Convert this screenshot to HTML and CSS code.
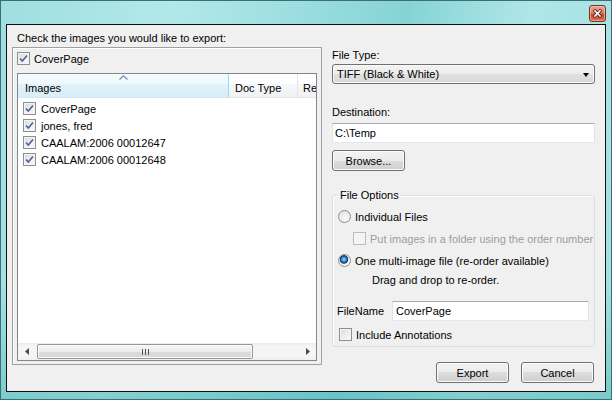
FILE: index.html
```html
<!DOCTYPE html>
<html lang="en">
<head>
  <meta charset="UTF-8" />
  <title>Export Images</title>
  <link rel="stylesheet" href="styles.css">
</head>
<body>

  <div class="window">
    <div class="titlebar">
      <div class="close-btn">
        <svg width="15" height="15" viewBox="0 0 15 15">
          <path d="M5 5 L10 10 M10 5 L5 10" stroke="#5a2016" stroke-width="3.2" stroke-linecap="square"/>
          <path d="M5 5 L10 10 M10 5 L5 10" stroke="#fff" stroke-width="1.6" stroke-linecap="square"/>
        </svg>
      </div>
    </div>

    <div class="client">
      <div class="left-col">
        <div class="caption">Check the images you would like to export:</div>
        <div class="image-panel">
          <div class="check-row top-check"><span class="cb checked"><svg viewBox="0 0 11 11"><path d="M2 5.5 L4.3 8 L9 2.5"/></svg></span>CoverPage</div>

          <div class="listview">
            <div class="lv-header">
              <div class="lv-col col-images sorted">
                <svg class="sort-arrow" width="9" height="5" viewBox="0 0 9 5"><path d="M0.5 4.5 L4.5 0.8 L8.5 4.5" fill="none" stroke="#6b8fb5" stroke-width="1.2"/></svg>
                Images
              </div>
              <div class="lv-col col-doctype">Doc Type</div>
              <div class="lv-col col-re">Re</div>
            </div>
            <div class="lv-rows">
              <div class="lv-row"><span class="cb checked"><svg viewBox="0 0 11 11"><path d="M2 5.5 L4.3 8 L9 2.5"/></svg></span>CoverPage</div>
              <div class="lv-row"><span class="cb checked"><svg viewBox="0 0 11 11"><path d="M2 5.5 L4.3 8 L9 2.5"/></svg></span>jones, fred</div>
              <div class="lv-row"><span class="cb checked"><svg viewBox="0 0 11 11"><path d="M2 5.5 L4.3 8 L9 2.5"/></svg></span>CAALAM:2006 00012647</div>
              <div class="lv-row"><span class="cb checked"><svg viewBox="0 0 11 11"><path d="M2 5.5 L4.3 8 L9 2.5"/></svg></span>CAALAM:2006 00012648</div>
            </div>
            <div class="hscroll">
              <span class="sb-btn"><svg width="4" height="7" viewBox="0 0 4 7"><path d="M4 0 L0 3.5 L4 7 Z" fill="#4b4b4b"/></svg></span>
              <span class="sb-thumb">
                <svg width="7" height="6" viewBox="0 0 7 6"><path d="M0.5 0 V6 M3.5 0 V6 M6.5 0 V6" stroke="#555" stroke-width="1"/></svg>
              </span>
              <span class="sb-track"></span>
              <span class="sb-btn"><svg width="4" height="7" viewBox="0 0 4 7"><path d="M0 0 L4 3.5 L0 7 Z" fill="#4b4b4b"/></svg></span>
            </div>
          </div>
        </div>
      </div>

      <div class="right-col">
        <div class="field-label first">File Type:</div>
        <div class="combo">TIFF (Black &amp; White)<span class="combo-arrow"></span></div>

        <div class="field-label dest">Destination:</div>
        <div class="textbox">C:\Temp</div>

        <button class="btn browse-btn">Browse...</button>

        <fieldset class="options">
          <legend>File Options</legend>
          <div class="opt-row opt-radio"><span class="rb"></span>Individual Files</div>
          <div class="opt-row opt-sub disabled"><span class="cb disabled-cb"></span>Put images in a folder using the order number</div>
          <div class="opt-row opt-radio second"><span class="rb selected"></span>One multi-image file (re-order available)</div>
          <div class="opt-row opt-hint">Drag and drop to re-order.</div>
          <div class="opt-row filename-row">
            <span class="filename-label">FileName</span>
            <div class="textbox filename-box">CoverPage</div>
          </div>
          <div class="opt-row opt-annot"><span class="cb"></span>Include Annotations</div>
        </fieldset>

        <div class="dialog-buttons">
          <button class="btn">Export</button>
          <button class="btn">Cancel</button>
        </div>
      </div>
    </div>
  </div>

</body>
</html>
```

FILE: styles.css
```css
* {
  box-sizing: border-box;
}
body {
  margin: 0;
  font-family: "Liberation Sans", Arial, sans-serif;
  font-size: 11px;
  color: #000;
  background: #24474a;
}
.window {
  width: 612px;
  height: 400px;
  border: 1px solid #3d6f72;
  padding: 0 5px 7px;
  display: flex;
  flex-direction: column;
  background:
    linear-gradient(180deg, rgba(255,255,255,0) 70%, rgba(60,170,170,0.4) 100%),
    linear-gradient(100deg, #9edfe1 0%, #b3e8e9 25%, #9adde0 45%, #86d3d6 60%, #afe6e8 78%, #a2e0e2 100%);
}
.titlebar {
  height: 23px;
  display: flex;
  justify-content: flex-end;
  align-items: flex-start;
  padding-top: 4px;
}
.close-btn {
  width: 17px;
  height: 17px;
  border: 1px solid #7a3426;
  border-radius: 3px;
  background-color: #d5634a;
  background-image: linear-gradient(#eba58f 0%, #e08468 45%, #cc4a2c 55%, #dc7050 100%);
  box-shadow: inset 0 0 0 1px rgba(255,220,200,0.45);
  display: flex;
  align-items: center;
  justify-content: center;
}
.client {
  flex: 1;
  border: 1px solid #101010;
  background: #f0f0f0;
  display: grid;
  grid-template-columns: 310px 263px;
  column-gap: 10px;
  padding: 0 10px 0 5px;
}

/* left side */
.caption {
  height: 22px;
  padding: 5px 0 0 5px;
  line-height: 17px;
}
.image-panel {
  height: 318px;
  border: 1px solid #a0a0a0;
  box-shadow: inset 1px 1px 0 #fff;
  padding: 4px 4px 3px;
  display: flex;
  flex-direction: column;
}
.check-row {
  display: flex;
  align-items: center;
}
.top-check {
  height: 13px;
  margin-bottom: 8px;
}
.cb {
  width: 13px;
  height: 13px;
  flex: none;
  border: 1px solid #8e8f8f;
  background: linear-gradient(135deg, #d8d9da 0%, #eeeeee 55%, #fbfbfb 100%);
  box-shadow: inset 0 0 0 1px #f4f4f4;
  margin-right: 4px;
  display: inline-flex;
}
.cb svg {
  width: 11px;
  height: 11px;
}
.cb svg path {
  fill: none;
  stroke: #4a5f95;
  stroke-width: 1.5;
}
.listview {
  flex: 1;
  border: 1px solid #828790;
  background: #fff;
  display: flex;
  flex-direction: column;
  overflow: hidden;
}
.lv-header {
  display: flex;
  height: 24px;
  flex: none;
}
.lv-col {
  position: relative;
  display: flex;
  align-items: center;
  padding-top: 4px;
  white-space: nowrap;
  overflow: hidden;
  border-right: 1px solid #e3e5e7;
  border-bottom: 1px solid #e5e5e5;
  background: linear-gradient(#ffffff 0%, #ffffff 45%, #f6f7f8 45%, #f1f2f3 100%);
}
.lv-col.sorted {
  background: linear-gradient(#f6fbfd 0%, #eef8fc 45%, #e0f1f9 45%, #d9eef8 100%);
  border-right-color: #96d9f9;
  border-bottom-color: #cfe8f5;
}
.sort-arrow {
  position: absolute;
  top: 1px;
  left: 101px;
}
.col-images {
  width: 211px;
  padding-left: 7px;
}
.col-doctype {
  width: 69px;
  padding-left: 6px;
}
.col-re {
  flex: 1;
  padding-left: 5px;
  border-right: none;
}
.lv-rows {
  flex: 1;
  padding-top: 2px;
}
.lv-row {
  height: 17px;
  display: flex;
  align-items: center;
  padding-left: 5px;
}
.lv-row .cb {
  margin-right: 5px;
}
.hscroll {
  height: 17px;
  flex: none;
  display: flex;
  align-items: center;
  background: linear-gradient(#ebebeb 0%, #f5f5f5 20%, #f5f5f5 80%, #eeeeee 100%);
}
.sb-btn {
  width: 17px;
  height: 17px;
  display: flex;
  align-items: center;
  justify-content: center;
}
.sb-thumb {
  width: 216px;
  height: 15px;
  margin-left: 2px;
  border: 1px solid #979797;
  border-radius: 2px;
  background: linear-gradient(#f6f6f6 0%, #ececec 50%, #dcdcdc 51%, #d6d6d6 100%);
  box-shadow: inset 0 0 0 1px #fbfbfb;
  display: flex;
  align-items: center;
  justify-content: center;
}
.sb-track {
  flex: 1;
}

/* right side */
.field-label {
  line-height: 16px;
}
.field-label.first {
  margin-top: 22px;
}
.field-label.dest {
  margin-top: 20px;
}
.combo {
  position: relative;
  height: 20px;
  margin-top: 1px;
  padding-left: 4px;
  line-height: 18px;
  border: 1px solid #707070;
  border-radius: 3px;
  background: linear-gradient(#f3f3f3 0%, #ececec 50%, #e0e0e0 50%, #d9d9d9 100%);
  box-shadow: inset 0 0 0 1px #fafafa;
}
.combo-arrow {
  position: absolute;
  right: 5px;
  top: 8px;
  border-left: 3.5px solid transparent;
  border-right: 3.5px solid transparent;
  border-top: 4px solid #000;
}
.textbox {
  height: 20px;
  margin-top: 3px;
  padding-left: 2px;
  line-height: 18px;
  background: #fff;
  border: 1px solid #dbdfe6;
  border-top-color: #abadb3;
  border-left-color: #e2e3ea;
  border-right-color: #e2e3ea;
  border-bottom-color: #e3e9ef;
}
.btn {
  width: 73px;
  height: 21px;
  padding: 0;
  font: inherit;
  color: #000;
  border: 1px solid #707070;
  border-radius: 3px;
  background: linear-gradient(#f2f2f2 0%, #ebebeb 50%, #dddddd 50%, #cfcfcf 100%);
  box-shadow: inset 0 0 0 1px #fcfcfc;
}
.browse-btn {
  display: block;
  margin-top: 7px;
}
.options {
  margin: 17px 0 0;
  padding: 0 0 3px;
  min-width: 0;
  border: 1px solid #d5dfe5;
  border-radius: 3px;
  box-shadow: inset 1px 1px 0 #fff;
}
.options legend {
  margin-left: 5px;
  padding: 0 2px;
  line-height: 14px;
}
.opt-row {
  height: 17px;
  display: flex;
  align-items: center;
  white-space: nowrap;
  overflow: hidden;
}
.opt-radio {
  margin-top: 6px;
  margin-left: 5px;
}
.opt-radio.second {
  margin-top: 5px;
}
.rb {
  width: 13px;
  height: 13px;
  flex: none;
  margin-right: 4px;
  border-radius: 50%;
  border: 1px solid #8e8f8f;
  background: radial-gradient(circle at 60% 65%, #fafafa 0%, #e8e8e8 60%, #d2d2d2 100%);
}
.rb.selected {
  background: radial-gradient(circle at 45% 40%, #b5e0fa 0px, #3f92d2 2px, #0d4b8c 3.5px, #1a3f6e 4px, #e8e8e8 4.6px, #f8f8f8 6px);
}
.opt-sub {
  margin-top: 5px;
  margin-left: 20px;
  color: #9d9d9d;
}
.cb.disabled-cb {
  border-color: #bcbcbc;
  background: #f4f4f4;
}
.opt-hint {
  margin-top: 2px;
  margin-left: 39px;
}
.filename-row {
  height: 20px;
  margin-top: 13px;
  margin-left: 4px;
  margin-right: 5px;
}
.filename-label {
  width: 55px;
  flex: none;
}
.filename-box {
  flex: 1;
  margin-top: 0;
  padding-left: 3px;
}
.opt-annot {
  margin-top: 5px;
  margin-left: 6px;
}
.dialog-buttons {
  display: flex;
  justify-content: flex-end;
  gap: 12px;
  margin-top: 15px;
  padding-right: 1px;
}
```
